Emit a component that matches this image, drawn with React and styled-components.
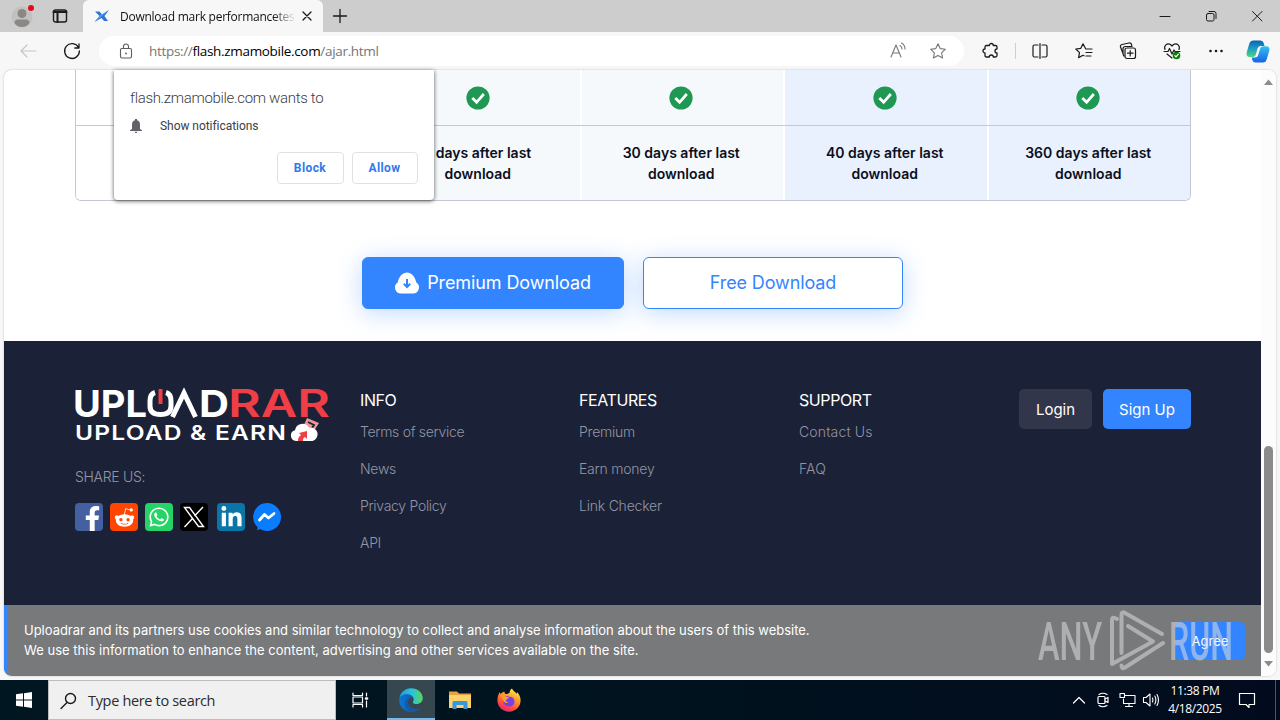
import React from 'react'
import styled, { createGlobalStyle } from 'styled-components';
import { FaFacebookF, FaRedditAlien, FaWhatsapp, FaLinkedinIn } from 'react-icons/fa';

const blue = '#3385ff';
const navy = '#1b2137';
const siteFont = `Inter, 'Liberation Sans', sans-serif`;
const systemFont = `'Open Sans', 'Noto Sans', sans-serif`;
const promptFont = `Roboto, 'Liberation Sans', sans-serif`;

const GlobalStyle = createGlobalStyle`
  * { box-sizing: border-box; }
  body { margin: 0; overflow: hidden; }
  svg { display: block; flex: none; overflow: visible; }
`

const Desktop = styled.div`
  width: 1280px;
  height: 720px;
  display: flex;
  flex-direction: column;
  background: #f7f7f7;
  font-family: ${siteFont};
  white-space: nowrap;
`

const Text = styled.span`
  letter-spacing: ${props => props.$track || 0}px;
`

/* browser chrome */

const TabStrip = styled.div`
  height: 32px;
  display: flex;
  background: #cdcdcd;
`
const StripSlot = styled.div`
  width: ${props => props.$width}px;
  display: flex;
  align-items: center;
  justify-content: center;
`
const Tab = styled.div`
  width: 240px;
  display: flex;
  align-items: center;
  padding: 0 10px 0 11px;
  background: #f7f7f7;
  border-radius: 6px 6px 0 0;
`
const TabTitle = styled.div`
  width: 174px;
  margin: 0 7px 0 10px;
  overflow: hidden;
  font: 12px ${systemFont};
  color: #111;
  mask-image: linear-gradient(90deg, #000 88%, transparent 101%);
`
const Spacer = styled.div`
  flex: 1;
`
const Toolbar = styled.div`
  height: 38px;
  display: flex;
  align-items: center;
  padding-left: 6px;
  background: #f7f7f7;
`
const ToolSlot = styled.div`
  width: ${props => props.$width || 44}px;
  display: flex;
  align-items: center;
  justify-content: center;
`
const AddressBar = styled.div`
  width: 865px;
  height: 30px;
  margin: 0 5px;
  padding: 0 6px 0 19px;
  display: flex;
  align-items: center;
  background: #fff;
  border-radius: 15px;
`
const Url = styled.div`
  flex: 1;
  margin-left: 15px;
  font: 13.5px ${systemFont};
  color: #757575;
  b { font-weight: 400; color: #000; }
`
const Divider = styled.div`
  width: 1px;
  height: 16px;
  margin: 0 2px;
  background: #cfcfcf;
`

/* web page */

const PageFrame = styled.div`
  position: relative;
  height: 606px;
  margin: 0 4px;
  display: flex;
  background: #fff;
  border-radius: 8px;
  box-shadow: 0 0 2px rgba(0, 0, 0, 0.25);
`
const Viewport = styled.div`
  width: 1257px;
  overflow: hidden;
  border-radius: 8px 0 0 8px;
`
const Plans = styled.div`
  width: 1116px;
  height: 131px;
  margin-left: 71px;
  display: grid;
  grid-template-columns: 300px repeat(4, 1fr);
  grid-template-rows: 56px 1fr;
  border: 1px solid #c3c8d1;
  border-top: 0;
  border-radius: 0 0 6px 6px;
  overflow: hidden;
`
const PlanCell = styled.div`
  display: flex;
  align-items: center;
  justify-content: center;
  text-align: center;
  font: 600 14px/21px ${siteFont};
  color: #0b0f1c;
  background: ${props => props.$tone};
  border-bottom: ${props => props.$ruled ? '1px solid #c3c8d1' : 0};
  & + & { box-shadow: inset 2px 0 #fff; }
`
const Downloads = styled.div`
  height: 140px;
  display: flex;
  gap: 19px;
  padding: 56px 0 0 358px;
`
const DownloadButton = styled.button`
  width: ${props => props.$primary ? 262 : 260}px;
  height: 52px;
  display: flex;
  align-items: center;
  justify-content: center;
  gap: 8px;
  padding: 0 0 1px;
  border: 1px solid ${blue};
  border-radius: 6px;
  box-shadow: 0 4px 24px rgba(51, 133, 255, 0.3);
  font: 400 18px ${siteFont};
  color: ${props => props.$primary ? '#fff' : blue};
  background: ${props => props.$primary ? blue : '#fff'};
`
const Footer = styled.footer`
  height: 264px;
  display: flex;
  padding: 48px 70px 0 71px;
  background: ${navy};
`
const Brand = styled.div`
  width: 285px;
`
const ShareLabel = styled.div`
  margin-top: 20px;
  font: 300 14px/24px ${siteFont};
  color: #9396a4;
`
const ShareRow = styled.div`
  display: flex;
  margin-top: 14px;
  gap: 7px;
`
const ShareTile = styled.div`
  width: 28px;
  height: 28px;
  display: flex;
  align-items: ${props => props.$low ? 'flex-end' : 'center'};
  justify-content: center;
  padding-left: ${props => props.$low ? 7 : 0}px;
  margin-left: ${props => props.$shift || 0}px;
  border-radius: 4px;
  overflow: hidden;
  color: #fff;
  background: ${props => props.$tone};
`
const LinkColumn = styled.nav`
  width: ${props => props.$width}px;
  display: flex;
  flex-direction: column;
`
const LinkHeading = styled.div`
  margin-bottom: 1px;
  font: 400 16px/23px ${siteFont};
  color: #fff;
`
const FooterLink = styled.a`
  font: 300 14px/37px ${siteFont};
  color: #9396a4;
`
const Account = styled.div`
  display: flex;
  gap: 11px;
`
const AccountButton = styled.button`
  width: ${props => props.$width}px;
  height: 40px;
  padding: 0;
  border: 0;
  border-radius: 5px;
  font: 400 15px ${siteFont};
  color: #fff;
  background: ${props => props.$tone};
`
const CookieBar = styled.div`
  position: relative;
  height: 71px;
  display: flex;
  align-items: center;
  justify-content: space-between;
  padding: 0 16px;
  border-left: 4px solid ${blue};
  background: #77797b;
`
const CookieText = styled.div`
  display: flex;
  flex-direction: column;
  margin-bottom: 2px;
  font: 400 13px/20px ${siteFont};
  color: #fff;
`
const AgreeButton = styled.button`
  width: 70px;
  height: 38px;
  padding: 0;
  margin-top: 1px;
  border: 0;
  border-radius: 5px;
  font: 400 13px ${siteFont};
  color: #fff;
  background: ${blue};
`
const Watermark = styled.svg`
  position: absolute;
  top: 2px;
  right: 29px;
`
const Scrollbar = styled.div`
  width: 15px;
  display: flex;
  flex-direction: column;
  align-items: center;
  padding: 9px 0 9px;
  background: #fcfcfc;
  border-radius: 0 8px 8px 0;
`
const Thumb = styled.div`
  width: 9px;
  height: 207px;
  margin: auto 0 8px;
  border-radius: 5px;
  background: #8b8b8b;
`

/* permission prompt */

const Prompt = styled.div`
  position: absolute;
  top: 0;
  left: 110px;
  width: 320px;
  height: 130px;
  padding: 18px 16px 16px;
  display: flex;
  flex-direction: column;
  background: #fff;
  border-radius: 0 0 4px 4px;
  box-shadow: 0 1px 4px rgba(0, 0, 0, 0.65);
  font-family: ${promptFont};
  color: #3c4043;
`
const PromptTitle = styled.div`
  font-size: 15px;
  font-weight: 300;
  line-height: 20px;
`
const PromptLine = styled.div`
  display: flex;
  align-items: center;
  gap: 18px;
  margin-top: 10px;
  font-size: 12px;
  line-height: 16px;
`
const PromptActions = styled.div`
  display: flex;
  justify-content: flex-end;
  gap: 8px;
  margin-top: auto;
`
const PromptButton = styled.button`
  width: ${props => props.$width}px;
  height: 32px;
  padding: 0 1px 0 0;
  border: 1px solid #dfe1e5;
  border-radius: 4px;
  font: 700 12px ${promptFont};
  letter-spacing: 0.4px;
  color: #3079ed;
  background: #fff;
`

/* taskbar */

const Taskbar = styled.div`
  height: 40px;
  margin-top: 4px;
  display: flex;
  background: linear-gradient(90deg, #001620 0%, #00141f 45%, #020b1d 100%);
  color: #fff;
`
const TaskSlot = styled.div`
  width: ${props => props.$width || 48}px;
  display: flex;
  align-items: center;
  justify-content: center;
  background: ${props => props.$active ? '#36474f' : 'none'};
  border-bottom: ${props => props.$active ? '2px solid #76b9ed' : 0};
  padding-top: ${props => props.$active ? 2 : 0}px;
  margin-right: ${props => props.$after || 0}px;
`
const Search = styled.div`
  width: 288px;
  display: flex;
  align-items: center;
  gap: 11px;
  padding-left: 11px;
  background: #f0f0f0;
  border: 1px solid #bdbdbd;
  font: 14.5px ${systemFont};
  color: #2b2b2b;
`
const Clock = styled.div`
  width: 64px;
  display: flex;
  flex-direction: column;
  align-items: center;
  justify-content: center;
  font: 12px/18px ${systemFont};
`
const DesktopEdge = styled.div`
  width: 5px;
  border-left: 1px solid #4a5562;
`

const Line = ({ size = 20, width = 1.2, color = '#1a1a1a', children }) => (
  <svg width={size} height={size} viewBox={`0 0 ${size} ${size}`} fill="none" stroke={color}
    strokeWidth={width} strokeLinecap="round" strokeLinejoin="round">{children}</svg>
)

const star = 'M9 1.8l2.2 4.8 5.2.6-3.8 3.6 1 5.2L9 13.4l-4.6 2.6 1-5.2L1.6 7.2l5.2-.6z';

const Check = () => (
  <svg width="24" height="24" viewBox="0 0 24 24">
    <circle cx="12" cy="12" r="11.6" fill="#1f9854" />
    <path d="M6.300 12l4.300 4.300L17.800 8" fill="none" stroke="#fff" strokeWidth="2.800" />
  </svg>
)

const Logo = () => (
  <svg width="256" height="56" viewBox="0 0 256 56" fill="#fff" fontFamily={siteFont}>
    <text x="-2" y="28" fontSize="37" fontWeight="700" textLength="74" lengthAdjust="spacingAndGlyphs">UPL</text>
    <path d="M80 3.500Q75 5 75 12v5q0 8.500 10.500 8.500T96 17v-5q0-7-5-8.500" fill="none" stroke="#fff" strokeWidth="5" />
    <path d="M85.500 0v15" stroke="#ef3e45" strokeWidth="4" />
    <path d="M97.500 28L109 4l11.500 24" fill="none" stroke="#fff" strokeWidth="5" />
    <text x="124" y="28" fontSize="37" fontWeight="700" textLength="30" lengthAdjust="spacingAndGlyphs">D</text>
    <text x="153" y="28" fontSize="38" fontWeight="600" fill="#ef3e45" textLength="102" lengthAdjust="spacingAndGlyphs">RAR</text>
    <text x="0" y="51" fontSize="20" fontWeight="600" letterSpacing="1" textLength="212" lengthAdjust="spacingAndGlyphs">UPLOAD &amp; EARN</text>
    <path d="M232 29l12 5-7 11-9-7z" fill="#e8979b" />
    <path d="M233 33l6 3-4 6" fill="none" stroke="#222" strokeWidth="1.800" />
    <path d="M221 52a5.500 5.500 0 0 1-1-10.800 7.500 7.500 0 0 1 14-2.500 6.500 6.500 0 0 1 3.500 13.300z" />
    <path d="M223 52c0-4 2-5 3-6l-2-2 8-2v8l-2-2c-2 1-2 2-2 4z" fill="#ef3e45" />
  </svg>
)

const EdgeLogo = () => (
  <svg width="24" height="24" viewBox="0 0 24 24">
    <defs>
      <linearGradient id="edgeTop" x1="0" x2="1"><stop offset="0" stopColor="#1d9de0" /><stop offset=".55" stopColor="#2bc3d8" /><stop offset="1" stopColor="#5ad65b" /></linearGradient>
      <linearGradient id="edgeLow" x1="0" x2="1"><stop offset="0" stopColor="#0c78d4" /><stop offset="1" stopColor="#0d4f9e" /></linearGradient>
    </defs>
    <path d="M.3 11C1 4.500 6 .2 12 .2c7 0 11.800 5 11.800 9.800 0 3.800-3 6-6 6-2.600 0-4-.9-4-1.600 0-.6.900-1 .9-2.900 0-2.500-2.600-4.700-6.200-4.700C4 6.800 1 8.500.3 11z" fill="url(#edgeTop)" />
    <path d="M.3 11.500C1 8 4 6.200 8 6.200c3.200 0 5.500 1.500 6.300 3.300-2.300-.8-5.300 1.300-5.300 4.800 0 3.800 3.500 6.700 7.500 6.700 2.200 0 4-.6 5.600-1.600-2 2.900-5.600 4.500-9.600 4.500C5.500 23.900-.3 18.500.3 11.500z" fill="url(#edgeLow)" />
    <path d="M9 14.300c0 3.800 3.500 6.700 7.500 6.700 2.200 0 4-.6 5.600-1.600-2 2.900-5.600 4.500-9.600 4.500-5-1.500-7-5-6.500-9 .4-3 2.500-5.500 6-6-1.600 1-3 3-3 5.400z" fill="#135ba8" />
  </svg>
)

const FolderLogo = () => (
  <svg width="22" height="20" viewBox="0 0 22 20">
    <path d="M0 1.500h8l2 2h12V8H0z" fill="#e8a33d" />
    <path d="M0 5h22v13H0z" fill="#fdd26a" />
    <path d="M3.500 19v-6.500q0-1.500 1.500-1.500h12q1.500 0 1.500 1.500V19h-4v-4h-7v4z" fill="#3a96d6" />
  </svg>
)

const FirefoxLogo = () => (
  <svg width="24" height="24" viewBox="0 0 24 24">
    <defs>
      <linearGradient id="fox" x1=".8" y1="0" x2=".3" y2="1"><stop offset="0" stopColor="#fff04c" /><stop offset=".4" stopColor="#ff9a2a" /><stop offset=".75" stopColor="#ff4a3d" /><stop offset="1" stopColor="#e3207f" /></linearGradient>
    </defs>
    <path d="M15 .5c1 2.500 3 3 4.500 5 .6-.1.500-1 .5-1.500C22.500 6.500 23.600 9 23.600 12.500c0 6.300-5.200 11.200-11.600 11.200S.4 18.800.4 12.500c0-3.500 1-6.500 2.500-8.500.1 1 .3 1.500.6 2C4.600 4.600 6 4 7.500 3.500c-.3 1 .2 2 1 2.500 2 0 3-.2 4-1.200C12.700 3 13.500 1.500 15 .5z" fill="url(#fox)" />
    <path d="M8 8.500c2-1 3 .3 4.500.3 3 0 5 1.700 5 4.700 0 3-2.500 5-5.500 5s-6-2.300-5.800-5.500c.9.700 2 1 3.300.7-2-.8-2.500-3-1.500-5.200z" fill="#7542e5" />
    <path d="M4 7.500c2-1 3.500-.5 5 1l3 .8c0 1.300-2.500 1.400-3 2.900-.1 1.300 1 2.300 2.600 2.600-3 1.200-6-1.300-7.600-7.300z" fill="#ff9b28" />
  </svg>
)

const Copilot = () => (
  <svg width="24" height="23" viewBox="0 0 24 23">
    <defs>
      <linearGradient id="copA" x1="0" y1="0" x2="0" y2="1"><stop offset="0" stopColor="#0d62b8" /><stop offset=".5" stopColor="#1d9fc0" /><stop offset="1" stopColor="#54d57c" /></linearGradient>
      <linearGradient id="copB" x1="0" y1="0" x2="0" y2="1"><stop offset="0" stopColor="#35c0f0" /><stop offset="1" stopColor="#1464e8" /></linearGradient>
    </defs>
    <path d="M7 .5h7.500q2.500 0 3.200 2.500l.8 3h-4q-2.200 0-3 2.500l-1.300 5Q9.400 17 6.500 17H4Q-.5 17 .8 12L3.500 3Q4.300.5 7 .5z" fill="url(#copA)" />
    <path d="M17 22.500H9.500Q7 22.500 6.300 20L5.700 17.500H9q2.400 0 3.200-2.500l1.800-6q.8-2.800 3.500-2.800H20q4.400 0 3.200 4.800L20.500 20q-.8 2.500-3.500 2.500z" fill="url(#copB)" />
  </svg>
)

const TabBar = () => (
  <TabStrip>
    <StripSlot $width={44}>
      <svg width="26" height="28" viewBox="0 0 26 28">
        <circle cx="13" cy="15" r="10.500" fill="#c3c1bf" />
        <circle cx="13" cy="11.500" r="4.500" fill="#8b8784" />
        <path d="M5.500 21q0-3.500 3.500-3.500h8q3.500 0 3.500 3.500-2.500 4-7.500 4t-7.500-4z" fill="#8b8784" />
        <circle cx="22" cy="6" r="3" fill="#e00b1c" />
      </svg>
    </StripSlot>
    <StripSlot $width={32}>
      <Line size={16} width={1.4}><rect x="1.500" y="2" width="13" height="12" rx="2" /><path d="M1.500 4h13M5.500 5v9" strokeWidth="2" /></Line>
    </StripSlot>
    <StripSlot $width={7} />
    <Tab>
      <svg width="16" height="16" viewBox="0 0 16 16">
        <path d="M1 3.500h4.500L8 6.500 15 2 10.500 8l3.500 5h-4L7.500 10 .5 14 5.500 8z" fill="#2f75d6" />
        <path d="M15 2L.5 14 5.500 8z" fill="#5aa0f0" />
      </svg>
      <TabTitle><Text $track={-0.25}>Download mark performancetest</Text></TabTitle>
      <Line size={12} width={1.3}><path d="M2 2l8 8M10 2l-8 8" /></Line>
    </Tab>
    <StripSlot $width={34}>
      <Line size={16} width={1.3}><path d="M8 1.500v13M1.500 8h13" /></Line>
    </StripSlot>
    <Spacer />
    <StripSlot $width={46}><Line size={12} width={1}><path d="M1 6.500h10" /></Line></StripSlot>
    <StripSlot $width={46}>
      <Line size={12} width={1}><rect x="1.500" y="3.500" width="7.500" height="7.500" rx="1.500" /><path d="M4 1.500h5q2 0 2 2v5" /></Line>
    </StripSlot>
    <StripSlot $width={46}><Line size={12} width={1}><path d="M1.500 1.500l9.500 9.500M11 1.500L1.500 11" /></Line></StripSlot>
  </TabStrip>
)

const AddressRow = () => (
  <Toolbar>
    <ToolSlot><Line size={18} color="#c6c6c6"><path d="M17 9H2M8 3L2 9l6 6" /></Line></ToolSlot>
    <ToolSlot><Line size={18} width={1.3}><path d="M15.500 5.500A7.400 7.400 0 1 0 16.400 9M16 1.800v4.200h-4.200" /></Line></ToolSlot>
    <AddressBar>
      <Line size={16} width={1.1} color="#5f5f5f"><rect x="2.500" y="5.500" width="11" height="9.500" rx="1.500" /><path d="M5.500 5.500V3.500a2.500 2.500 0 0 1 5 0v2" /><circle cx="8" cy="10.500" r=".4" /></Line>
      <Url><Text $track={-0.32}>https://<b>flash.zmamobile.com</b>/ajar.html</Text></Url>
      <ToolSlot $width={40}>
        <Line size={18} width={1.1} color="#777"><path d="M2 15L7 3l5 12M3.700 11h6.600M11 3.500q2 1.200 2 3.500M12.500 1q3.500 2 3.500 6" /></Line>
      </ToolSlot>
      <ToolSlot $width={40}><Line size={18} width={1.1} color="#777"><path d={star} /></Line></ToolSlot>
    </AddressBar>
    <ToolSlot>
      <Line size={18} width={1.3}><path d="M4.500 3.500h2.800a2 2 0 0 1 4 0h2.200q1.500 0 1.500 1.500v2a2 2 0 1 0 0 4v2.500q0 1.500-1.500 1.500h-2.200a2 2 0 0 0-4 0H4.500Q3 15 3 13.500V11a2 2 0 0 1 0-4V5q0-1.500 1.500-1.500z" /></Line>
    </ToolSlot>
    <Divider />
    <ToolSlot><Line size={18} width={1.2}><path d="M7 3H3.500Q2 3 2 4.500v9Q2 15 3.500 15H7M11 3h3.500Q16 3 16 4.500v9q0 1.500-1.500 1.500H11M9 1.500v15" /></Line></ToolSlot>
    <ToolSlot><Line size={18} width={1.2}><path d="M10.500 6.500L8 1.800 5.800 6.300.8 7l3.700 3.600-.9 5L8 13.300l1 .5M11 7h6M11 10.500h6M11 14h5" /></Line></ToolSlot>
    <ToolSlot><Line size={18} width={1.2}><path d="M4 11.500L1.500 5Q1 3 3 2.500L10 1q2-.4 2.500 1.500l.3 1.500M5 14Q4 13 4 11V7q0-2.500 2.500-2.500H13" /><rect x="6" y="6" width="10.500" height="10.500" rx="2" /><path d="M11.200 8.500v5.500M8.500 11.200H14" /></Line></ToolSlot>
    <ToolSlot>
      <Line size={18} width={1.2}>
        <path d="M2 7.500C.5 4 4 .5 7.500 2.500L9 4l1.500-1.500C14 .5 17.500 4 16 7.500M1 9.500h4l1.500-3L9 12l2-4 1 1.500h5M4 12l5 4" />
        <circle cx="13.500" cy="13.500" r="3.800" fill="#107c10" stroke="none" /><path d="M11.800 13.700l1.200 1.200 2.300-2.700" stroke="#fff" />
      </Line>
    </ToolSlot>
    <ToolSlot><svg width="16" height="4" viewBox="0 0 16 4" fill="#1a1a1a"><circle cx="2.500" cy="2" r="1.300" /><circle cx="8" cy="2" r="1.300" /><circle cx="13.500" cy="2" r="1.300" /></svg></ToolSlot>
    <ToolSlot $width={40}><Copilot /></ToolSlot>
  </Toolbar>
)

const plans = [
  { days: '7', tone: '#f6f9fc' },
  { days: '30', tone: '#f6f9fc' },
  { days: '40', tone: '#e9f1ff' },
  { days: '360', tone: '#e9f1ff' },
]

const columns = [
  { title: 'INFO', width: 219, track: -0.3, links: ['Terms of service', 'News', 'Privacy Policy', 'API'] },
  { title: 'FEATURES', width: 220, track: -0.22, links: ['Premium', 'Earn money', 'Link Checker'] },
  { title: 'SUPPORT', width: 220, track: 0.15, links: ['Contact Us', 'FAQ'] },
]

const PlanTable = () => (
  <Plans>
    <PlanCell $ruled $tone="#fff" />
    {plans.map(plan => <PlanCell key={plan.days} $ruled $tone={plan.tone}><Check /></PlanCell>)}
    <PlanCell $tone="#fff" />
    {plans.map(plan => (
      <PlanCell key={plan.days} $tone={plan.tone}>
        <Text>{plan.days} days after last<br />download</Text>
      </PlanCell>
    ))}
  </Plans>
)

const SiteFooter = () => (
  <Footer>
    <Brand>
      <Logo />
      <ShareLabel><Text $track={-0.3}>SHARE US:</Text></ShareLabel>
      <ShareRow>
        <ShareTile $tone="#4460a0" $low>
          <FaFacebookF size={25} />
        </ShareTile>
        <ShareTile $tone="#ff4500"><FaRedditAlien size={21} /></ShareTile>
        <ShareTile $tone="#25d366"><FaWhatsapp size={22} /></ShareTile>
        <ShareTile $tone="#000">
          <svg width="22" height="22" viewBox="0 0 22 22" fill="none" stroke="#fff" strokeWidth="1.400">
            <path d="M1.500 1.500h5l14 19h-5zM20 1l-8.500 9M9.500 12.500L1.500 21" />
          </svg>
        </ShareTile>
        <ShareTile $tone="#0a76a8" $shift={2}><FaLinkedinIn size={23} /></ShareTile>
        <ShareTile $tone="none" $shift={1}>
          <svg width="28" height="28" viewBox="0 0 28 28">
            <path d="M14 0a14 14 0 1 1-7 26.100L4.500 27.500V24A14 14 0 0 1 14 0z" fill="#0a7cff" />
            <path d="M6.500 17l5-5.500 4 3.500 5.500-4.500" fill="none" stroke="#fff" strokeWidth="2.800" strokeLinejoin="round" strokeLinecap="round" />
          </svg>
        </ShareTile>
      </ShareRow>
    </Brand>
    {columns.map(column => (
      <LinkColumn key={column.title} $width={column.width}>
        <LinkHeading><Text $track={-0.4}>{column.title}</Text></LinkHeading>
        {column.links.map(link => <FooterLink key={link}><Text $track={column.track}>{link}</Text></FooterLink>)}
      </LinkColumn>
    ))}
    <Account>
      <AccountButton $width={73} $tone="#32364a">Login</AccountButton>
      <AccountButton $width={88} $tone={blue}>Sign Up</AccountButton>
    </Account>
  </Footer>
)

const AnyRun = () => (
  <Watermark width="194" height="66" viewBox="0 0 194 66" opacity=".55" fill="#dcdcdc" fontFamily="Roboto, 'Liberation Sans', sans-serif">
    <text x="0" y="53" fontSize="53" fontWeight="500" textLength="64" lengthAdjust="spacingAndGlyphs">ANY</text>
    <text x="131" y="53" fontSize="53" fontWeight="500" textLength="64" lengthAdjust="spacingAndGlyphs">RUN</text>
    <g fill="none" stroke="#dcdcdc" strokeWidth="4" strokeLinejoin="round" strokeLinecap="round">
      <path d="M79 12q-5-3-5 1v44l41-22.500L90 19" />
      <path d="M83.500 46V8q0-4 3.500-2l37 21M125 36L87 60.500q-3.500 2-3.500-2" />
    </g>
  </Watermark>
)

const PermissionPrompt = () => (
  <Prompt>
    <PromptTitle><Text $track={-0.33}>flash.zmamobile.com wants to</Text></PromptTitle>
    <PromptLine>
      <svg width="12" height="14" viewBox="0 0 12 14" fill="#5f6368"><path d="M5 0h2v1.300Q10 2 10 5.500V10l2 1.300v.7H0v-.7L2 10V5.500Q2 2 5 1.300zM4.500 12.700h3q-.3 1.300-1.500 1.300t-1.500-1.300z" /></svg>
      <Text $track={-0.05}>Show notifications</Text>
    </PromptLine>
    <PromptActions>
      <PromptButton $width={67}>Block</PromptButton>
      <PromptButton $width={66}>Allow</PromptButton>
    </PromptActions>
  </Prompt>
)

const WindowsTaskbar = () => (
  <Taskbar>
    <TaskSlot>
      <svg width="16" height="16" viewBox="0 0 16 16" fill="#fff"><path d="M0 2.300l7-1V7.500H0zM8 1.200L16 0v7.500H8zM0 8.500h7v6.200l-7-1zM8 8.500h8V16l-8-1.200z" /></svg>
    </TaskSlot>
    <Search>
      <Line size={17} width={1.4}><circle cx="10.500" cy="6.500" r="5" /><path d="M7 10.500L1 16.500" /></Line>
      <Text $track={-0.33}>Type here to search</Text>
    </Search>
    <TaskSlot $after={3}>
      <Line size={18} width={1.2} color="#fff"><path d="M2 2v2.500h9.500V2M2 16v-2.500h9.500V16M15.500 2v3M15.500 10v6" /><rect x="2" y="6" width="9.500" height="6" /><path d="M15 7.500h1" strokeWidth="2.500" /></Line>
    </TaskSlot>
    <TaskSlot $active><EdgeLogo /></TaskSlot>
    <TaskSlot $width={50}><FolderLogo /></TaskSlot>
    <TaskSlot><FirefoxLogo /></TaskSlot>
    <Spacer />
    <TaskSlot $width={24}><Line size={14} width={1.2} color="#fff"><path d="M1.500 10L7 4.500l5.500 5.500" /></Line></TaskSlot>
    <TaskSlot $width={24}><Line size={16} width={1.2} color="#fff"><rect x="3" y="4.500" width="7" height="7" rx="1" /><path d="M10 7l3-1.500v5L10 9M4 2.500q4-2.500 8 0M4 13.500q4 2.500 8 0" /></Line></TaskSlot>
    <TaskSlot $width={24}><Line size={16} width={1.1} color="#fff"><path d="M5.500 3.500H16v8H4.500V7M10 11.500v3M6.500 14.500h7" /><rect x="1" y="1.500" width="4.500" height="4" /></Line></TaskSlot>
    <TaskSlot $width={24}><Line size={18} width={1.1} color="#fff"><path d="M1.500 6.500v5h2.500l4 3.500V3L4 6.500zM10.500 7q1 2 0 4M12.800 5q2.200 4 0 8M15 3.500q3 5.500 0 11" /></Line></TaskSlot>
    <Clock>
      <Text $track={-0.35}>11:38 PM</Text>
      <Text $track={-0.35}>4/18/2025</Text>
    </Clock>
    <TaskSlot $width={40}><Line size={18} width={1.2} color="#fff"><path d="M1.500 2.500h15v11H11v3l-3-3H1.500z" /></Line></TaskSlot>
    <TaskSlot $width={8} />
    <DesktopEdge />
  </Taskbar>
)

const App = () => (
  <Desktop>
    <GlobalStyle />
    <TabBar />
    <AddressRow />
    <PageFrame>
      <Viewport>
        <PlanTable />
        <Downloads>
          <DownloadButton $primary>
            <svg width="24" height="22" viewBox="0 0 24 22">
              <path d="M6 21.500a6 6 0 0 1-3.300-11C4 4 8 .5 12 .5s8 3.500 9.300 10a6 6 0 0 1-3.300 11z" fill="#fff" />
              <path d="M12 7v8M8.800 11.800L12 15l3.200-3.200" fill="none" stroke={blue} strokeWidth="2" />
            </svg>
            <Text $track={-0.1}>Premium Download</Text>
          </DownloadButton>
          <DownloadButton><Text $track={-0.12}>Free Download</Text></DownloadButton>
        </Downloads>
        <SiteFooter />
        <CookieBar>
          <CookieText>
            <Text $track={-0.015}>Uploadrar and its partners use cookies and similar technology to collect and analyse information about the users of this website.</Text>
            <Text $track={0.02}>We use this information to enhance the content, advertising and other services available on the site.</Text>
          </CookieText>
          <AgreeButton>Agree</AgreeButton>
          <AnyRun />
        </CookieBar>
      </Viewport>
      <Scrollbar>
        <svg width="9" height="6" viewBox="0 0 9 6" fill="#8b8b8b"><path d="M0 6l4.500-5.500L9 6z" /></svg>
        <Thumb />
        <svg width="9" height="6" viewBox="0 0 9 6" fill="#8b8b8b"><path d="M0 0l4.500 5.500L9 0z" /></svg>
      </Scrollbar>
      <PermissionPrompt />
    </PageFrame>
    <WindowsTaskbar />
  </Desktop>
)

export default App
